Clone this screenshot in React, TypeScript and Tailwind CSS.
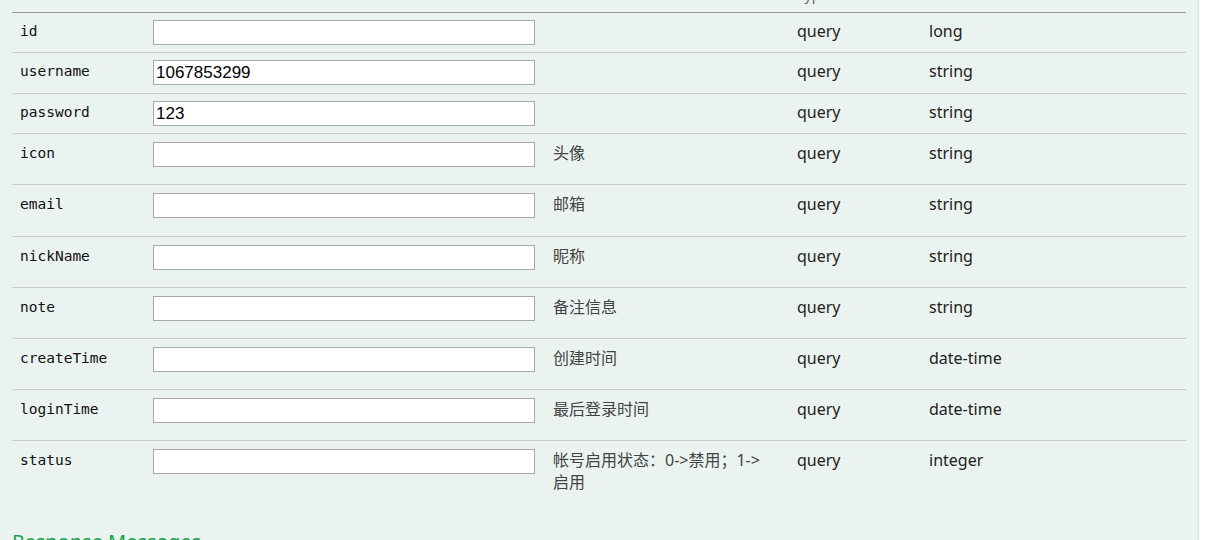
const rows: { name: string; value?: string; desc?: string; dtype: string }[] = [
  { name: 'id', dtype: 'long' },
  { name: 'username', value: '1067853299', dtype: 'string' },
  { name: 'password', value: '123', dtype: 'string' },
  { name: 'icon', desc: '头像', dtype: 'string' },
  { name: 'email', desc: '邮箱', dtype: 'string' },
  { name: 'nickName', desc: '昵称', dtype: 'string' },
  { name: 'note', desc: '备注信息', dtype: 'string' },
  { name: 'createTime', desc: '创建时间', dtype: 'date-time' },
  { name: 'loginTime', desc: '最后登录时间', dtype: 'date-time' },
  { name: 'status', desc: '帐号启用状态：0->禁用；1->启用', dtype: 'integer' },
];

const sans = "font-['Noto_Sans','Noto_Sans_CJK_SC',sans-serif]";

function rowHeight(i: number, tall: boolean, last: boolean) {
  if (last) return 'h-[60px]';
  if (i === 4) return 'h-[52px] border-b border-[#ccc]';
  if (tall) return 'h-[51px] border-b border-[#ccc]';
  if (i === 1) return 'h-[41px] border-b border-[#ccc]';
  return 'h-[40px] border-b border-[#ccc]';
}

export default function App() {
  return (
    <div className="min-h-screen bg-white">
      <div className="w-[1199px] bg-[#ebf3f0] border-r border-[#c3e8d1] px-[12px] pb-4">
        {/* table head, mostly scrolled off */}
        <div className={`flex h-[13px] border-b border-[#999] ${sans}`}>
          <div className="w-[777px] shrink-0" />
          <div className="flex h-[12px] items-end pl-[8px]">
            <span className="block shrink-0 pb-[7px] text-[14px] leading-[20px] text-[#666]">Type</span>
          </div>
        </div>

        {rows.map((r, i) => {
          const last = i === rows.length - 1;
          const tall = !!r.desc;
          return (
            <div
              key={r.name}
              className={`grid grid-cols-[133px_400px_244px_132px_1fr] items-start ${rowHeight(i, tall, last)} ${
                tall ? 'pt-[8px]' : 'pt-[7px]'
              }`}
            >
              <div className="pl-[8px] font-['DejaVu_Sans_Mono',monospace] text-[14.5px] leading-[22px] text-[#111]">
                {r.name}
              </div>
              <div className="pl-[8px]">
                <input
                  readOnly
                  value={r.value ?? ''}
                  className="block w-[382px] h-[25px] bg-white border border-[#a9a9a9] px-[2px] font-['Liberation_Sans',Arial,sans-serif] text-[17px] text-black outline-none"
                />
              </div>
              <div className={`pl-[8px] pr-[18px] text-[16px] leading-[22px] text-[#444] ${sans}`}>{r.desc}</div>
              <div className={`pl-[8px] text-[16px] leading-[22px] text-[#222] ${sans}`}>query</div>
              <div className={`pl-[8px] text-[16px] leading-[22px] text-[#222] ${sans}`}>{r.dtype}</div>
            </div>
          );
        })}

        <h4 className={`mt-[29px] text-[20px] leading-[24px] text-[#10a54a] ${sans}`}>Response Messages</h4>
      </div>
    </div>
  );
}
